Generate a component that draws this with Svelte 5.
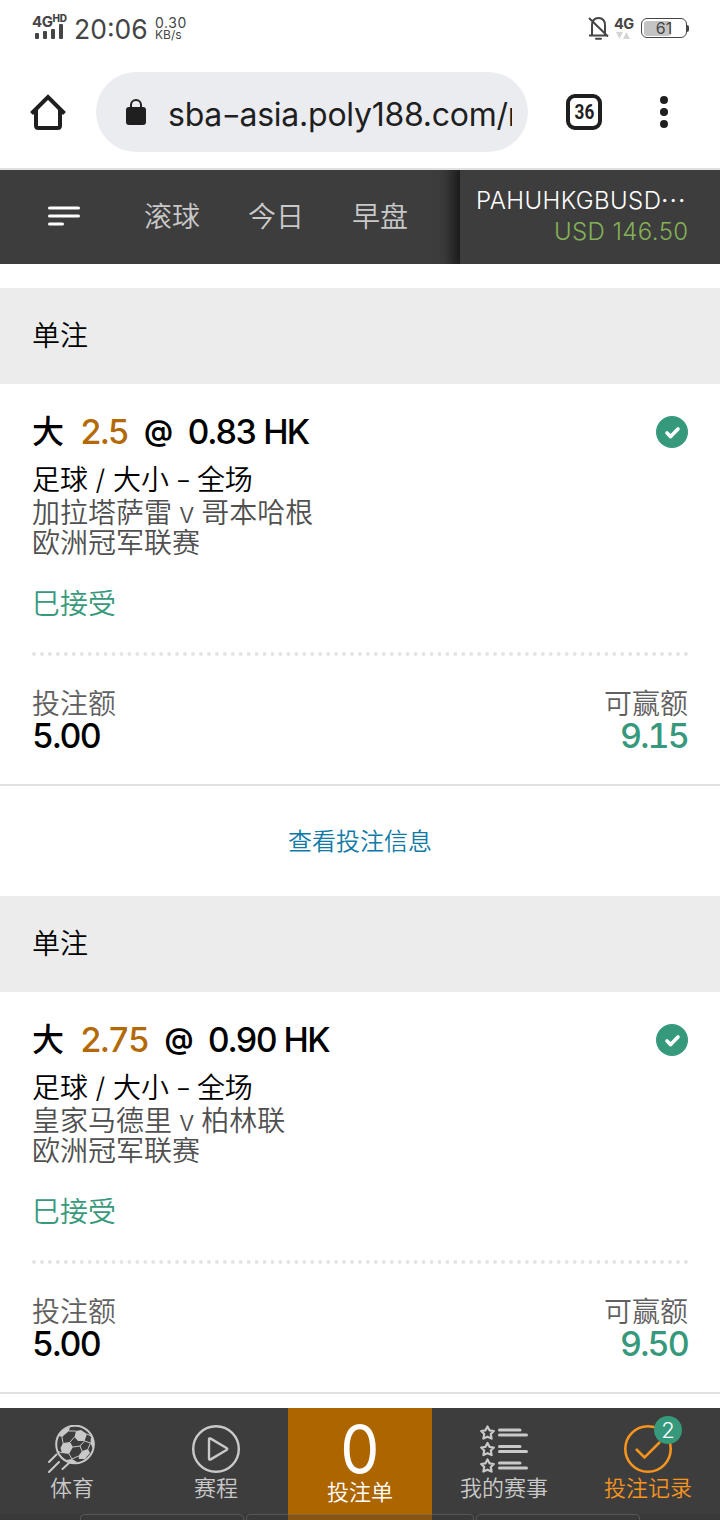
<script>
  const bets = [
    { line: '2.5', odds: '0.83 HK', match: '加拉塔萨雷 v 哥本哈根', stake: '5.00', win: '9.15' },
    { line: '2.75', odds: '0.90 HK', match: '皇家马德里 v 柏林联', stake: '5.00', win: '9.50' }
  ];

  const tabs = ['滚球', '今日', '早盘'];
  const signal = [6, 8, 10, 15];
  const star = 'M7.5 1.5 L9.5 5.3 L13.8 6 L10.8 9 L11.6 13.6 L7.5 11.7 L3.4 13.6 L4.2 9 L1.2 6 L5.5 5.3 Z';
</script>

<div class="screen">
  <div class="status">
    <div class="network">
      <div class="network-name">4G<sup>HD</sup></div>
      <div class="bars">
        {#each signal as h}
          <i style="height: {h}px"></i>
        {/each}
      </div>
    </div>
    <div class="clock">20:06</div>
    <div class="speed"><span class="rate">0.30</span><span>KB/s</span></div>
    <div class="spacer"></div>
    <svg class="bell" width="22" height="26" viewBox="0 0 22 26" fill="none" stroke="#454545" stroke-width="2">
      <path d="M4 20V10.500C4 5.500 6.500 3 10.500 3S17 5.500 17 10.500V20M1 20.500H19M1 3L20 21.500" />
      <path d="M8 23.800H13" stroke-linecap="round" />
    </svg>
    <div class="data">
      <span>4G</span>
      <svg width="14" height="7" viewBox="0 0 14 7" fill="#d5d5d5">
        <path d="M0 0H7L3.500 7ZM7 7H14L10.500 0Z" />
      </svg>
    </div>
    <div class="battery"><div class="level"></div><span>61</span></div>
    <div class="battery-tip"></div>
  </div>

  <div class="browser">
    <svg class="home" width="36" height="36" viewBox="0 0 36 36" fill="none" stroke="#1f1f1f" stroke-width="4">
      <path d="M1.500 19.500L18 3L34.500 19.500" />
      <path d="M6 16V31.500Q6 34 8.500 34H27.500Q30 34 30 31.500V16" />
    </svg>
    <div class="address">
      <svg width="20" height="26" viewBox="0 0 20 26">
        <rect x="0" y="8" width="20" height="18" rx="3" fill="#1f1f1f" />
        <path d="M5 9V6A5 5 0 0 1 15 6V9" fill="none" stroke="#1f1f1f" stroke-width="2" />
      </svg>
      <span class="url">sba<i>-</i>asia.poly188.com/m</span>
    </div>
    <div class="tab-count"><span>36</span></div>
    <div class="dots"><i></i><i></i><i></i></div>
  </div>

  <header>
    <svg class="menu" width="32" height="20" viewBox="0 0 32 20" stroke="#fff" stroke-width="3" stroke-linecap="round">
      <path d="M1.500 2H30.500M1.500 10H30.500M1.500 18H14.500" />
    </svg>
    <nav class="periods">
      {#each tabs as tab}
        <span>{tab}</span>
      {/each}
    </nav>
    <div class="account">
      <span class="user">PAHUHKGBUSD<b>···</b></span>
      <span class="balance">USD 146.50</span>
    </div>
  </header>

  <main>
    {#each bets as bet}
      <section>
        <h2>单注</h2>
        <div class="bet">
          <div class="title">
            <span class="pick">大</span>
            <span class="line">{bet.line}</span>
            <span class="at">@</span>
            <span class="odds">{bet.odds}</span>
            <svg class="tick" width="32" height="32" viewBox="0 0 32 32">
              <circle cx="16" cy="16" r="16" fill="#37997b" />
              <path d="M11 17L14.700 20.600L22 13" fill="none" stroke="#fff" stroke-width="3.600" stroke-linecap="round" stroke-linejoin="round" />
            </svg>
          </div>
          <div class="market">足球 / 大小 <i>-</i> 全场</div>
          <div class="match">{bet.match}</div>
          <div class="league">欧洲冠军联赛</div>
          <div class="accepted">巳接受</div>
          <svg class="dotted" width="656" height="4" viewBox="0 0 656 4">
            <path d="M2 2H655" stroke="#e4e4e4" stroke-width="4" stroke-linecap="round" stroke-dasharray="0 7.950" />
          </svg>
          <div class="amounts">
            <div><span class="label">投注额</span><span class="value">{bet.stake}</span></div>
            <div class="right"><span class="label">可赢额</span><span class="value green">{bet.win}</span></div>
          </div>
        </div>
        <button>查看投注信息</button>
      </section>
    {/each}
  </main>

  <footer>
    <div class="item">
      <svg width="48" height="48" viewBox="0 0 48 48" fill="none" stroke="#c9c9c9">
        <circle cx="27" cy="19.500" r="18.800" stroke-width="2" />
        <g fill="#c9c9c9" stroke="none">
          <path d="M28 6L33 5L39 9L36.500 16L30 16L26.500 12Z" />
          <path d="M15 18L22 17L25 22L21 29L14 28L12.500 23Z" />
          <path d="M34 26L40 24L42 28L37 34L31 34L30.500 31Z" />
          <path d="M11 11Q15 4 22 2L21 6L14 12Z" />
          <path d="M18 35L24 34L29 37L25 39Z" />
          <path d="M43 11L46.500 18L45 24L42.500 18Z" />
        </g>
        <path stroke-width="1" d="M21 6L28 6M26.500 12L22 17M25 22L32 21L36.500 16M32 21L34 26M36.500 16L42.500 18L40 24M14 12L15 18M14 28L9 26M21 29L24 34L30.500 31M39 9L43 11" />
        <path stroke-width="2" stroke-linecap="round" d="M1 37L8.500 29.500M1 47L11 37M14.500 44L21 38" />
      </svg>
      <span>体育</span>
    </div>
    <div class="item">
      <svg width="48" height="48" viewBox="0 0 48 48" fill="none" stroke="#c9c9c9" stroke-width="2.400" stroke-linejoin="round">
        <circle cx="24" cy="24" r="22.800" />
        <path d="M17 14.500Q17 12.800 18.700 13.600L34.500 23Q36 24 34.500 25L18.700 34.400Q17 35.200 17 33.500Z" />
      </svg>
      <span>赛程</span>
    </div>
    <div class="item slip">
      <strong>0</strong>
      <span>投注单</span>
    </div>
    <div class="item">
      <svg width="48" height="48" viewBox="0 0 48 48" fill="none" stroke="#c9c9c9" stroke-linecap="round" stroke-linejoin="round">
        {#each [0, 16.5, 33] as y}
          <g transform="translate(0 {y})">
            <path d={star} stroke-width="2.200" />
            <path d="M19.500 5H40M19.500 10H46.500" stroke-width="3" />
          </g>
        {/each}
      </svg>
      <span>我的赛事</span>
    </div>
    <div class="item current">
      <svg width="48" height="48" viewBox="0 0 48 48" fill="none" stroke="#f7941d" stroke-width="2.600">
        <circle cx="24" cy="24" r="22.700" />
        <path d="M12 24L20.500 32.500L36 17" />
      </svg>
      <span>投注记录</span>
      <b class="badge">2</b>
    </div>
    <div class="system-keys"><i></i><i></i><i></i></div>
  </footer>
</div>

<style>
  :global(body) {
    background: #fff;
  }

  .screen {
    width: 720px;
    height: 1520px;
    overflow: hidden;
    display: flex;
    flex-direction: column;
    position: relative;
    font-family: Inter, "Noto Sans CJK SC", sans-serif;
    font-weight: 350;
    color: #000;
    white-space: nowrap;
  }

  .status {
    height: 56px;
    box-sizing: border-box;
    padding: 0 32px;
    display: flex;
    align-items: center;
    color: #454545;
    font-weight: 400;
  }

  .network {
    width: 42px;
    height: 28px;
    margin-top: 0;
  }

  .network-name {
    font: 700 15px/15px Inter, sans-serif;
    height: 13px;
    letter-spacing: -0.5px;
    display: flex;
  }

  .network-name sup {
    font-size: 10px;
    font-weight: 800;
    line-height: 9px;
    letter-spacing: -0.2px;
  }

  .bars {
    height: 12px;
    margin-left: 3px;
    display: flex;
    align-items: flex-end;
    gap: 4px;
  }

  .bars i {
    width: 4px;
    border-radius: 1px;
    background: #454545;
  }

  .clock {
    width: 81px;
    font-size: 26.5px;
    line-height: 32px;
    margin-top: 2px;
  }

  .speed {
    display: flex;
    flex-direction: column;
    font-size: 12px;
    line-height: 12px;
    margin-top: 1px;
  }

  .rate {
    font-size: 14px;
    line-height: 13px;
    letter-spacing: 0.6px;
  }

  .spacer {
    flex: 1;
  }

  .bell {
    margin-right: 4px;
  }

  .data {
    width: 27px;
    display: flex;
    flex-direction: column;
    font: 700 14.500px/16px Inter, sans-serif;
    letter-spacing: -0.6px;
    margin-top: -1px;
  }

  .data svg {
    margin-left: 2px;
  }

  .battery {
    width: 46px;
    height: 20px;
    box-sizing: border-box;
    border: 1.500px solid #454545;
    border-radius: 6px;
    padding: 2px;
    display: grid;
    font-size: 16px;
  }

  .battery > * {
    grid-area: 1 / 1;
  }

  .battery span {
    line-height: 15px;
    text-align: center;
  }

  .level {
    width: 27px;
    border-radius: 3px;
    background: #c4c4c4;
  }

  .battery-tip {
    width: 2px;
    height: 7px;
    border-radius: 0 2px 2px 0;
    background: #454545;
    margin-right: -1px;
  }

  .browser {
    height: 114px;
    box-sizing: border-box;
    border-bottom: 2px solid #e1e1e1;
    padding: 0 52px 0 30px;
    display: flex;
    align-items: center;
  }

  .address {
    width: 432px;
    height: 80px;
    box-sizing: border-box;
    margin: 0 38px 0 30px;
    padding: 0 16px 0 30px;
    border-radius: 40px;
    background: #ebecf0;
    display: flex;
    align-items: center;
    gap: 22px;
  }

  .url {
    flex: 1;
    overflow: hidden;
    font-size: 32px;
    font-weight: 380;
    line-height: 44px;
    letter-spacing: -0.25px;
    margin-top: 5px;
    color: #1f1f1f;
  }

  .url i {
    display: inline-block;
    font-style: normal;
    transform: scaleX(1.3);
    margin: 0 1.500px;
  }

  .tab-count {
    width: 36px;
    height: 36px;
    box-sizing: border-box;
    border: 4px solid #1f1f1f;
    border-radius: 9px;
    font: 700 20px/28px Roboto, sans-serif;
    text-align: center;
    color: #1f1f1f;
  }

  .tab-count span {
    display: inline-block;
    transform: scaleX(0.86);
  }

  .dots {
    margin-left: auto;
    display: flex;
    flex-direction: column;
    gap: 4px;
  }

  .dots i {
    width: 8px;
    height: 8px;
    border-radius: 50%;
    background: #1f1f1f;
  }

  header {
    height: 94px;
    flex: none;
    background: #3d3d3d;
    display: flex;
    align-items: center;
    overflow: hidden;
  }

  .menu {
    margin: -2px 64px 0 48px;
  }

  .periods {
    display: flex;
    gap: 48px;
    font-size: 28px;
    line-height: 40px;
    color: #c9c9c9;
    flex: 1;
  }

  .account {
    width: 260px;
    height: 94px;
    box-sizing: border-box;
    padding: 15px 32px 0 16px;
    background: #3d3d3d;
    box-shadow: 0 0 14px 7px #151515;
    display: flex;
    flex-direction: column;
    font-size: 24px;
    font-weight: 300;
    line-height: 31px;
    letter-spacing: 0.4px;
    color: #fff;
  }

  .user b {
    font-weight: 400;
    letter-spacing: 1.500px;
  }

  .balance {
    align-self: flex-end;
    margin-right: -0.5px;
    color: #84b157;
  }

  main {
    padding-top: 24px;
  }

  h2 {
    margin: 0;
    height: 96px;
    padding-left: 32px;
    background: #ececec;
    font-size: 28px;
    font-weight: 350;
    line-height: 97px;
  }

  .bet {
    height: 402px;
    box-sizing: border-box;
    padding: 28px 32px 0;
    border-bottom: 2px solid #e1e1e1;
  }

  .title {
    height: 40px;
    display: flex;
    align-items: center;
    font-size: 34px;
    line-height: 40px;
    font-weight: 500;
    letter-spacing: -1.7px;
    font-variant-numeric: tabular-nums;
  }

  .pick {
    font-size: 32px;
    letter-spacing: 0;
    margin-right: 16px;
  }

  .line {
    color: #b36a06;
    margin-right: 16px;
  }

  .at {
    font-size: 29px;
    font-weight: 600;
    margin: -3px 16px 0 0;
  }

  .tick {
    margin-left: auto;
  }

  .market,
  .match,
  .league,
  .accepted,
  .label {
    font-size: 28px;
  }

  .market {
    margin-top: 12px;
    line-height: 33px;
    letter-spacing: -0.1px;
  }

  .market i {
    display: inline-block;
    font-style: normal;
    transform: scaleX(1.25);
  }

  .match,
  .league {
    line-height: 30px;
    color: #505050;
  }

  .match {
    margin-top: 1px;
    word-spacing: -1px;
  }

  .accepted {
    margin-top: 28px;
    line-height: 36px;
    color: #37997b;
  }

  .dotted {
    display: block;
    margin-top: 30px;
  }

  .amounts {
    margin-top: 31px;
    display: flex;
    justify-content: space-between;
  }

  .amounts > div {
    display: flex;
    flex-direction: column;
  }

  .amounts .right {
    align-items: flex-end;
  }

  .label {
    line-height: 34px;
    color: #606060;
  }

  .value {
    font-size: 34px;
    line-height: 32px;
    font-weight: 500;
    letter-spacing: -1.8px;
    margin-top: -1px;
    font-variant-numeric: tabular-nums;
  }

  .value.green {
    color: #37997b;
  }

  button {
    display: block;
    width: 100%;
    height: 110px;
    padding: 0 0 4px;
    border: 0;
    background: none;
    font: inherit;
    font-size: 24px;
    color: #0f7aa6;
  }

  footer {
    position: absolute;
    left: 0;
    bottom: 0;
    width: 720px;
    height: 112px;
    background: #3d3d3d;
    display: flex;
  }

  .item {
    width: 144px;
    box-sizing: border-box;
    padding-top: 17px;
    display: flex;
    flex-direction: column;
    align-items: center;
    font-size: 22px;
    line-height: 31px;
    color: #c9c9c9;
    position: relative;
  }

  .slip {
    background: #ad6500;
    color: #fff;
  }

  .slip strong {
    height: 52px;
    font-size: 66px;
    line-height: 49px;
    font-weight: 400;
    transform: scaleX(0.94);
  }

  .current {
    color: #f7941d;
  }

  .badge {
    position: absolute;
    top: 8px;
    right: 38px;
    width: 28px;
    height: 28px;
    border-radius: 50%;
    background: #37997b;
    color: #fff;
    font-size: 22px;
    font-weight: 350;
    line-height: 28px;
    text-align: center;
  }

  .system-keys {
    position: absolute;
    left: 0;
    bottom: 0;
    width: 720px;
    height: 6px;
    box-sizing: border-box;
    padding: 0 80px;
    display: flex;
    gap: 2px;
    overflow: hidden;
    background: rgba(50, 50, 50, 0.3);
  }

  .system-keys i {
    flex: 164;
    height: 12px;
    box-sizing: border-box;
    border: 1px solid rgba(140, 140, 140, 0.35);
    border-radius: 4px;
  }

  .system-keys i:nth-child(2) {
    flex: 228;
  }
</style>
